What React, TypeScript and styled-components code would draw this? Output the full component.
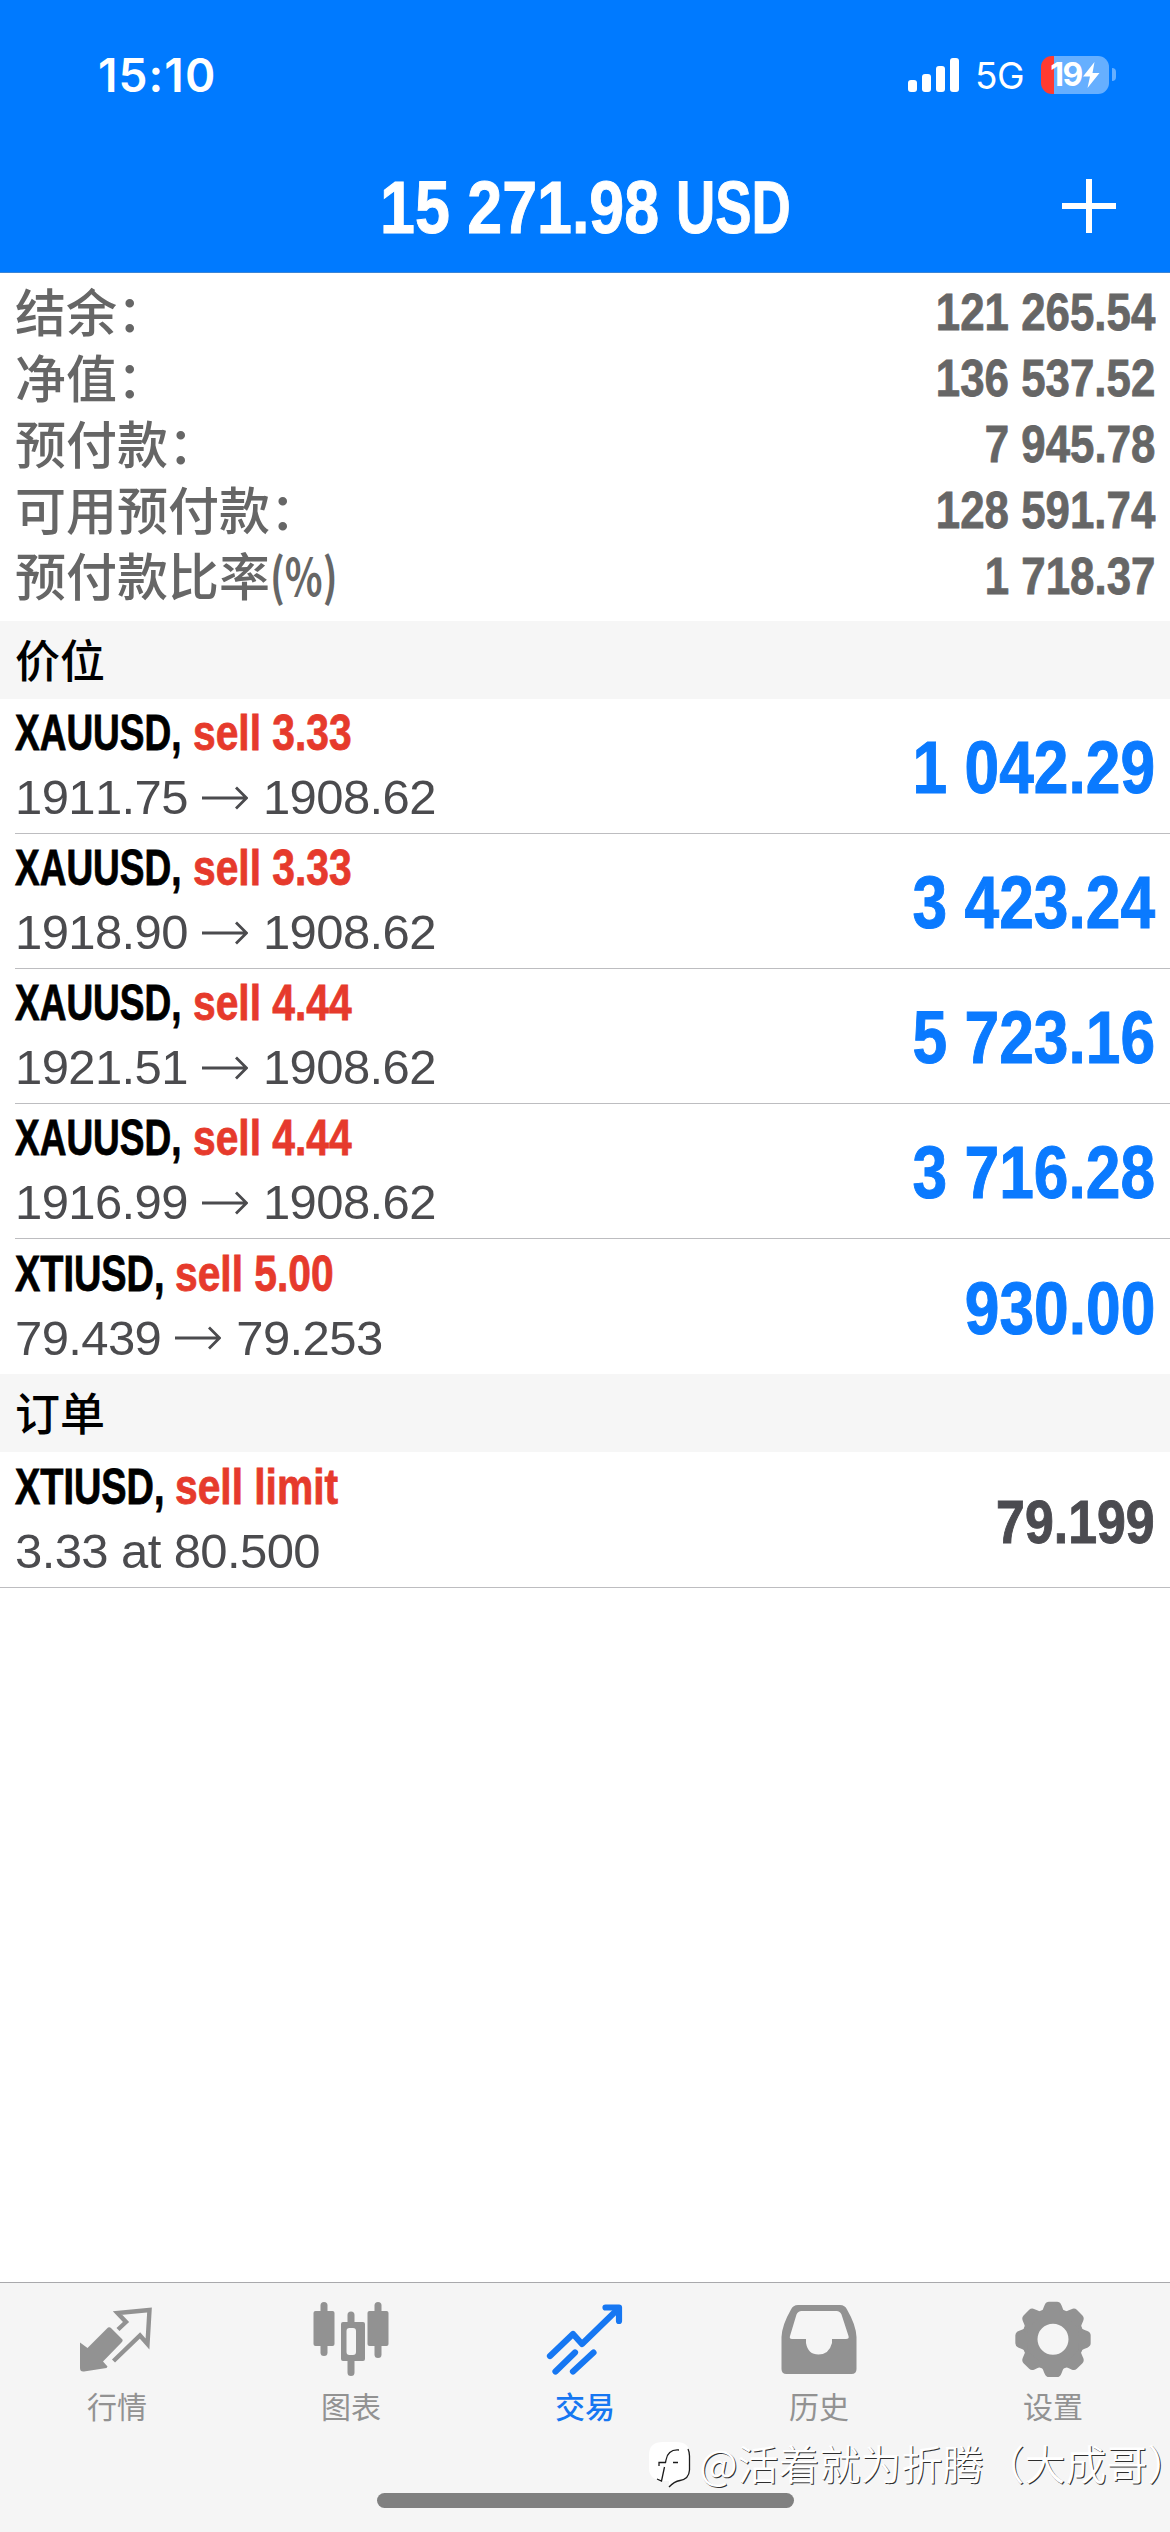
import React, { useLayoutEffect, useRef, useState } from 'react';
import styled, { createGlobalStyle } from 'styled-components';

const sans = '"Liberation Sans", Arial, "Noto Sans CJK SC", sans-serif';
const cjk = '"Noto Sans CJK SC", sans-serif';
const ui = 'Inter, "Liberation Sans", sans-serif';
const blue = '#007aff';
const grey = '#929292';

const Global = createGlobalStyle`
  *, *::before, *::after { box-sizing: border-box; }
  html, body { margin: 0; padding: 0; background: #fff; }
  body { font-family: ${sans}; }
`;

const Screen = styled.div`
  width: 1170px;
  height: 2532px;
  display: flex;
  flex-direction: column;
  background: #fff;
  overflow: hidden;
`;

/* ---------- condensed text ---------- */

const CondensedBox = styled.span<{ $right?: boolean }>`
  display: inline-flex;
  justify-content: ${(p) => (p.$right ? 'flex-end' : 'flex-start')};
`;

const CondensedInner = styled.span<{ $scale: number; $right?: boolean }>`
  display: inline-block;
  flex: none;
  white-space: pre;
  font-kerning: none;
  transform: scaleX(${(p) => p.$scale});
  transform-origin: ${(p) => (p.$right ? '100%' : '0')} 50%;
`;

type CondensedProps = { scale: number; right?: boolean; children: React.ReactNode };

function Condensed({ scale, right, children }: CondensedProps) {
  const inner = useRef<HTMLSpanElement>(null);
  const [width, setWidth] = useState<number>();
  useLayoutEffect(() => {
    if (inner.current) setWidth(inner.current.offsetWidth * scale);
  }, [scale, children]);
  return (
    <CondensedBox $right={right} style={{ width }}>
      <CondensedInner ref={inner} $scale={scale} $right={right}>
        {children}
      </CondensedInner>
    </CondensedBox>
  );
}

/* ---------- header ---------- */

const Header = styled.header`
  height: 273px;
  flex: none;
  background: ${blue};
  color: #fff;
  border-bottom: 1px solid #3c85d6;
`;

const StatusBar = styled.div`
  height: 140px;
  padding: 9px 54px 0 98px;
  display: flex;
  align-items: center;
  justify-content: space-between;
`;

const Clock = styled.span`
  font: 600 46px/50px ${ui};
  letter-spacing: 1.1px;
`;

const StatusIcons = styled.div`
  display: flex;
  align-items: center;
`;

const Signal = styled.div`
  display: flex;
  align-items: flex-end;
  gap: 5px;
  height: 34px;
  margin-right: 16px;
`;

const SignalBar = styled.i<{ $h: number }>`
  width: 9px;
  height: ${(p) => p.$h}px;
  border-radius: 3px;
  background: #fff;
`;

const Network = styled.span`
  width: 66px;
  font: 400 37px/40px ${ui};
  letter-spacing: -0.6px;
  margin-top: 2px;
`;

const Battery = styled.div`
  display: flex;
  align-items: center;
  justify-content: center;
  width: 68px;
  height: 38px;
  border-radius: 11px;
  color: #fff;
  background: linear-gradient(90deg, #ff3b30 0 13px, #66afff 13px);
  font: 700 32px/38px ${ui};
  letter-spacing: -1.5px;
`;

const BatteryTip = styled.i`
  width: 4px;
  height: 13px;
  margin-left: 3px;
  border-radius: 0 6px 6px 0;
  background: #66afff;
`;

const TitleBar = styled.div`
  height: 132px;
  display: grid;
  grid-template-columns: 1fr auto 1fr;
  align-items: center;
`;

const Title = styled.h1`
  grid-column: 2;
  margin: 4px 0 0;
  display: flex;
  gap: 17px;
  font: 700 74px/80px ${sans};
  -webkit-text-stroke: 1px currentColor;
`;

const AddButton = styled.button`
  justify-self: end;
  margin: 0 54px 0 0;
  padding: 0;
  width: 54px;
  height: 54px;
  border: 0;
  background: none;
  color: #fff;
`;

/* ---------- account summary ---------- */

const Summary = styled.section`
  height: 348px;
  flex: none;
  padding: 5px 15px 0;
  color: #666;
`;

const SummaryRow = styled.div`
  height: 66px;
  display: flex;
  justify-content: space-between;
  align-items: center;
`;

const SummaryLabel = styled.span`
  display: flex;
  margin-top: -3px;
  font: 500 51px/66px ${cjk};
`;

const Unit = styled.span`
  font-weight: 700;
`;

const SummaryValue = styled.span`
  font: 700 52px/66px ${sans};
  -webkit-text-stroke: 0.8px currentColor;
  margin-top: 1px;
`;

/* ---------- lists ---------- */

const SectionTitle = styled.h2`
  height: 78px;
  flex: none;
  margin: 0;
  padding: 0 15px;
  background: #f6f6f6;
  color: #000;
  font: 500 45px/75px ${cjk};
`;

const Row = styled.div<{ $line: 'inset' | 'full' | 'none' }>`
  height: ${(p) => (p.$line === 'full' ? 136 : 135)}px;
  flex: none;
  margin-left: ${(p) => (p.$line === 'full' ? 0 : 15)}px;
  padding: 0 15px 0 ${(p) => (p.$line === 'full' ? 15 : 0)}px;
  display: flex;
  justify-content: space-between;
  align-items: center;
  border-bottom: ${(p) => (p.$line === 'none' ? 0 : 1)}px solid #bdbdc0;
`;

const Details = styled.div`
  display: flex;
  flex-direction: column;
`;

const Deal = styled.div`
  display: flex;
  gap: 11px;
  height: 62px;
  font: 700 50px/63px ${sans};
  color: #000;
  -webkit-text-stroke: 0.8px currentColor;
`;

const Side = styled.span`
  color: #e63a2c;
`;

const Prices = styled.div`
  display: flex;
  align-items: center;
  height: 66px;
  font: 400 49px/64px ${sans};
  font-kerning: none;
  letter-spacing: -0.6px;
  color: #4b4b4e;
  white-space: pre;
`;

const ArrowIcon = styled.svg`
  width: 46px;
  height: 24px;
  margin: 1px 15px 0 14px;
`;

const Amount = styled.span<{ $pending?: boolean }>`
  font: 700 ${(p) => (p.$pending ? 62 : 74)}px/84px ${sans};
  color: ${(p) => (p.$pending ? '#4b4b50' : '#0a7aff')};
  -webkit-text-stroke: 1px currentColor;
  margin-top: 4px;
`;

/* ---------- tab bar ---------- */

const Spacer = styled.div`
  flex: 1;
`;

const TabBar = styled.nav`
  position: relative;
  height: 250px;
  flex: none;
  border-top: 1px solid #a9a9ac;
  background: #f5f5f5;
  display: flex;
  flex-direction: column;
`;

const Tabs = styled.div`
  display: grid;
  grid-template-columns: repeat(5, 1fr);
`;

const Tab = styled.div<{ $active?: boolean }>`
  display: flex;
  flex-direction: column;
  align-items: center;
  padding-top: 18px;
  color: ${(p) => (p.$active ? '#1677f2' : grey)};
`;

const TabIcon = styled.svg`
  width: 78px;
  height: 78px;
`;

const TabLabel = styled.span<{ $active?: boolean }>`
  margin-top: 6px;
  font: ${(p) => (p.$active ? 500 : 400)} 30px/40px ${cjk};
`;

const HomeIndicator = styled.div`
  width: 417px;
  height: 15px;
  margin: auto auto 24px;
  border-radius: 8px;
  background: #808080;
`;

const Watermark = styled.div`
  position: absolute;
  right: 2px;
  top: 151px;
  display: flex;
  align-items: center;
  gap: 7px;
  font: 350 41px/56px ${cjk};
  color: #fff;
  white-space: nowrap;
  text-shadow: 1px 1px 0 #2e2e2e;
`;

const HalfWidth = styled.span`
  font-feature-settings: 'halt';
`;

const WatermarkLogo = styled.svg`
  width: 43px;
  height: 48px;
  margin-top: 5px;
`;

/* ---------- icons ---------- */

const QuotesIcon = () => (
  <TabIcon viewBox="0 0 78 78">
    <path
      d="M2 41.500 9.500 47 29 27.500Q31 25 33.500 27.500L44 38Q45.500 39.500 43.500 41.500L25 60.500 29.500 65.500 28.500 67 6 70.500Q2 71 2 67Z"
      fill="currentColor"
    />
    <path
      d="M40 28.500 48 21 39.500 12 71.500 9 69.500 43 62 34.500 35.500 60"
      fill="none"
      stroke="currentColor"
      strokeWidth="4.400"
    />
  </TabIcon>
);

const ChartIcon = () => (
  <TabIcon viewBox="0 0 78 78" fill="currentColor">
    <rect x="8.500" y="1" width="7" height="54" rx="3.500" />
    <rect x="1.500" y="10" width="21" height="35" rx="2" />
    <rect x="62.500" y="1" width="7" height="56" rx="3.500" />
    <rect x="55.500" y="10" width="21" height="35" rx="2" />
    <path
      d="M35.500 21V14a3.500 3.500 0 0 1 7 0V21H51a2 2 0 0 1 2 2V58a2 2 0 0 1-2 2H42.500V71.500a3.500 3.500 0 0 1-7 0V60H31a2 2 0 0 1-2-2V23a2 2 0 0 1 2-2ZM37.500 27a3 3 0 0 0-3 3V51a3 3 0 0 0 3 3H41a3 3 0 0 0 3-3V30a3 3 0 0 0-3-3Z"
      fillRule="evenodd"
    />
  </TabIcon>
);

const TradeIcon = () => (
  <TabIcon viewBox="0 0 78 78" fill="none" stroke="currentColor" strokeWidth="6.200" strokeLinecap="round" strokeLinejoin="round">
    <path d="M4 55 27 33 36 43 72 8" />
    <path d="M59.500 6.500H73V20" />
    <path d="M9.500 70.500 29 51.500M27 70.500 47.500 51.500" />
  </TabIcon>
);

const HistoryIcon = () => (
  <TabIcon viewBox="0 0 78 78">
    <path
      d="M18 4H60Q65 4 67 8.500 76 24 76.500 36V68Q76.500 73 71.500 73H6.500Q1.500 73 1.500 68V36Q2 24 11 8.500 13 4 18 4ZM21.500 10Q18 10 16.500 13.500L10 35Q9 38 12 38H26V42Q28 53.500 38.500 53.500T52 42V38H66Q69.500 38 68.500 35L61.500 13.500Q60 10 56.500 10Z"
      fill="currentColor"
      fillRule="evenodd"
    />
  </TabIcon>
);

const SettingsIcon = () => (
  <TabIcon viewBox="-117 -115 234 234">
    <circle r="70" fill="none" stroke="currentColor" strokeWidth="47" />
    {[0, 45, 90, 135, 180, 225, 270, 315].map((a) => (
      <path
        key={a}
        transform={`rotate(${a})`}
        fill="currentColor"
        d="M-44-76C-30-84-30-92-25-103Q-21-113-12-113H12Q21-113 25-103C30-92 30-84 44-76Z"
      />
    ))}
  </TabIcon>
);

const tabs = [
  { label: '行情', Icon: QuotesIcon },
  { label: '图表', Icon: ChartIcon },
  { label: '交易', Icon: TradeIcon, active: true },
  { label: '历史', Icon: HistoryIcon },
  { label: '设置', Icon: SettingsIcon },
];

/* ---------- data ---------- */

const summary = [
  { label: '结余：', value: '121 265.54' },
  { label: '净值：', value: '136 537.52' },
  { label: '预付款：', value: '7 945.78' },
  { label: '可用预付款：', value: '128 591.74' },
  { label: '预付款比率', unit: '(%)', value: '1 718.37' },
];

const positions = [
  { symbol: 'XAUUSD', side: 'sell 3.33', open: '1911.75', now: '1908.62', profit: '1 042.29' },
  { symbol: 'XAUUSD', side: 'sell 3.33', open: '1918.90', now: '1908.62', profit: '3 423.24' },
  { symbol: 'XAUUSD', side: 'sell 4.44', open: '1921.51', now: '1908.62', profit: '5 723.16' },
  { symbol: 'XAUUSD', side: 'sell 4.44', open: '1916.99', now: '1908.62', profit: '3 716.28' },
  { symbol: 'XTIUSD', side: 'sell 5.00', open: '79.439', now: '79.253', profit: '930.00' },
];

const symbolScale: Record<string, number> = { XAUUSD: 0.74, XTIUSD: 0.758 };

const DealLine = ({ symbol, side }: { symbol: string; side: string }) => (
  <Deal>
    <Condensed scale={symbolScale[symbol]}>{`${symbol},`}</Condensed>
    <Side>
      <Condensed scale={0.815}>{side}</Condensed>
    </Side>
  </Deal>
);

export default function App() {
  return (
    <Screen>
      <Global />
      <Header>
        <StatusBar>
          <Clock>15:10</Clock>
          <StatusIcons>
            <Signal>
              {[12, 18, 26, 34].map((h) => (
                <SignalBar key={h} $h={h} />
              ))}
            </Signal>
            <Network>5G</Network>
            <Battery>
              19
              <svg width="18" height="26" viewBox="0 0 18 26">
                <path d="M12.500 0 1 14.500H8L5.500 26 17.500 11H10.500Z" fill="#fff" />
              </svg>
            </Battery>
            <BatteryTip />
          </StatusIcons>
        </StatusBar>
        <TitleBar>
          <Title>
            <Condensed scale={0.848}>15 271.98</Condensed>
            <Condensed scale={0.735}>USD</Condensed>
          </Title>
          <AddButton aria-label="add">
            <svg width="54" height="54" viewBox="0 0 54 54">
              <path d="M0 27H54M27 0V54" stroke="currentColor" strokeWidth="6" />
            </svg>
          </AddButton>
        </TitleBar>
      </Header>

      <Summary>
        {summary.map((s) => (
          <SummaryRow key={s.label}>
            <SummaryLabel>
              {s.label}
              {s.unit && (
                <Unit>
                  <Condensed scale={0.77}>{s.unit}</Condensed>
                </Unit>
              )}
            </SummaryLabel>
            <SummaryValue>
              <Condensed scale={0.843} right>
                {s.value}
              </Condensed>
            </SummaryValue>
          </SummaryRow>
        ))}
      </Summary>

      <SectionTitle>价位</SectionTitle>
      {positions.map((p, i) => (
        <Row key={p.open} $line={i < positions.length - 1 ? 'inset' : 'none'}>
          <Details>
            <DealLine symbol={p.symbol} side={p.side} />
            <Prices>
              {p.open}
              <ArrowIcon viewBox="0 0 46 24" fill="none" stroke="currentColor" strokeWidth="2.800">
                <path d="M0 12H44.500M34 1.500 44.500 12 34 22.500" />
              </ArrowIcon>
              {p.now}
            </Prices>
          </Details>
          <Amount>
            <Condensed scale={0.842} right>
              {p.profit}
            </Condensed>
          </Amount>
        </Row>
      ))}

      <SectionTitle>订单</SectionTitle>
      <Row $line="full">
        <Details>
          <DealLine symbol="XTIUSD" side="sell limit" />
          <Prices>3.33 at 80.500</Prices>
        </Details>
        <Amount $pending>
          <Condensed scale={0.836} right>
            79.199
          </Condensed>
        </Amount>
      </Row>

      <Spacer />

      <TabBar>
        <Tabs>
          {tabs.map(({ label, Icon, active }) => (
            <Tab key={label} $active={active}>
              <Icon />
              <TabLabel $active={active}>{label}</TabLabel>
            </Tab>
          ))}
        </Tabs>
        <HomeIndicator />
        <Watermark>
          <WatermarkLogo viewBox="0 0 43 48">
            <path d="M14 1H27Q41 1 41 14V30Q41 39 30 40 25 41 20 46V40H12Q0 38 0 27V14Q0 1 14 1Z" fill="#fff" />
            <path
              d="M39 8Q40.500 11 40.500 15V29Q40 38 31 39.500 25 40.500 20 46M30 9Q19 8 17 19L16.500 21.500H10V25M15.500 26 12.500 40 8 38M24 21.500H29"
              fill="none"
              stroke="#1c1c1c"
              strokeWidth="1.300"
            />
          </WatermarkLogo>
          <span>
            @活着就为折腾（大成哥<HalfWidth>）</HalfWidth>
          </span>
        </Watermark>
      </TabBar>
    </Screen>
  );
}
